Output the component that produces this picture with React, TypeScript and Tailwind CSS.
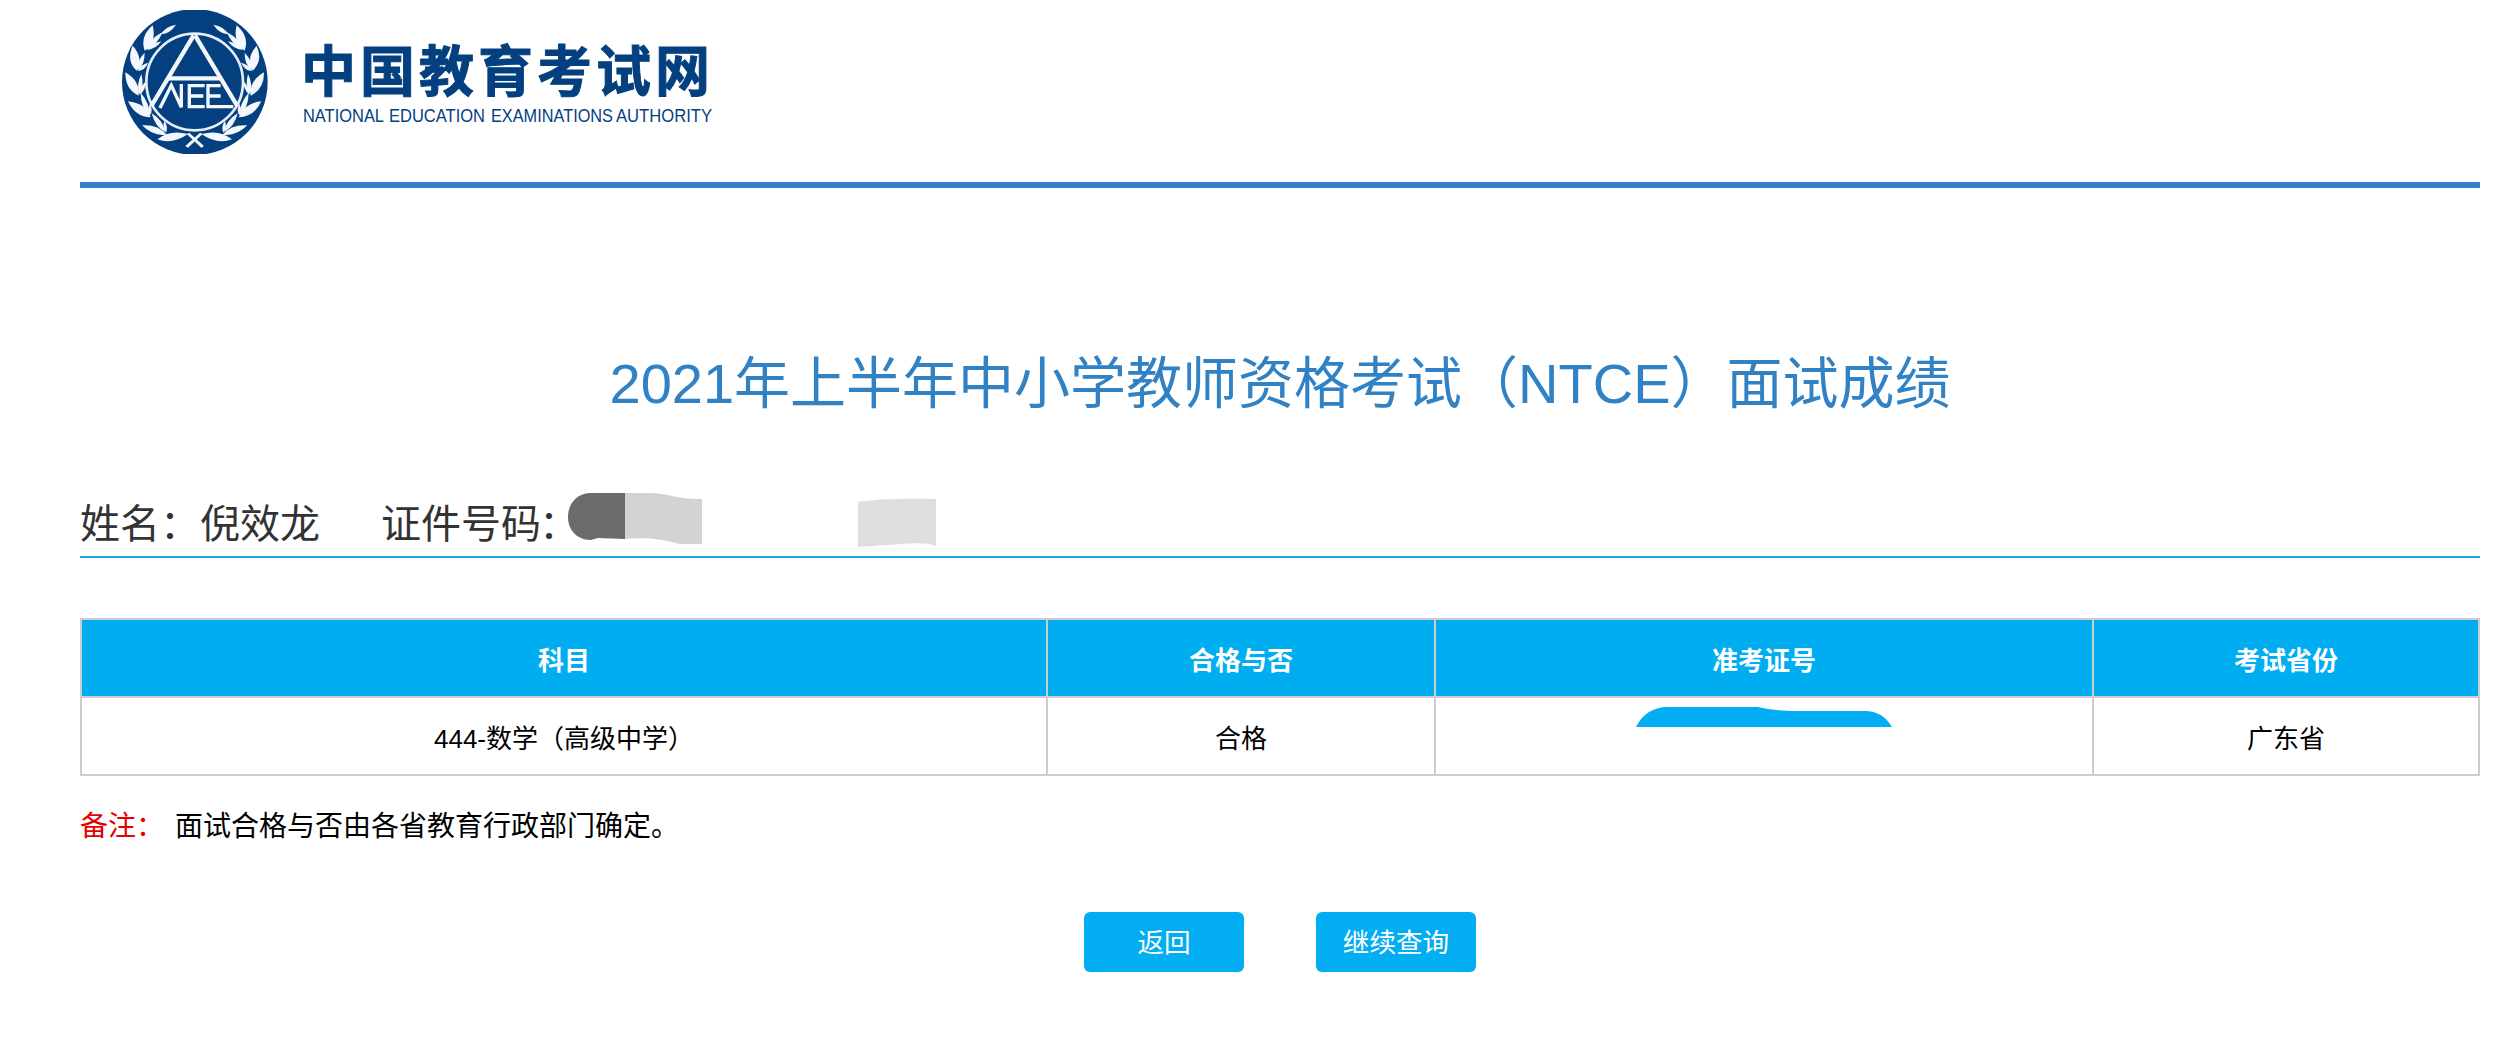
const NAVY = "#04407f";

type Leaf = [number, number, number, number, number];

// Base x, base y, tip x, tip y, bulge of each leaf on the left branch.
const leaves: Leaf[] = [
  [303, 103, 348, 74, 13],
  [254, 152, 278, 76, 27],
  [258, 150, 308, 96, 15],
  [262, 150, 304, 124, 11],
  [230, 212, 218, 137, 27],
  [232, 213, 254, 158, 14],
  [234, 213, 265, 188, 11],
  [236, 287, 196, 217, 26],
  [238, 284, 244, 222, 13],
  [240, 284, 258, 243, 10],
  [272, 352, 204, 304, 26],
  [268, 346, 242, 278, 15],
  [270, 346, 270, 312, 10],
  [320, 404, 246, 376, 20],
  [316, 396, 275, 340, 16],
  [318, 398, 313, 362, 10],
  [292, 418, 384, 402, 24],
];

function leafPath([x1, y1, x2, y2, w]: Leaf) {
  const dx = x2 - x1;
  const dy = y2 - y1;
  const len = Math.hypot(dx, dy);
  const nx = (-dy / len) * w;
  const ny = (dx / len) * w;
  const mx = x1 + dx * 0.45;
  const my = y1 + dy * 0.45;
  return `M${x1} ${y1}Q${mx + nx} ${my + ny} ${x2} ${y2}Q${mx - nx} ${my - ny} ${x1} ${y1}Z`;
}

function Branch() {
  return (
    <g fill="#f4f8fc">
      {leaves.map((leaf, i) => (
        <path key={i} d={leafPath(leaf)} />
      ))}
      <path d="M376 438L420 398L428 402L384 443Z" />
    </g>
  );
}

function Emblem() {
  return (
    <svg viewBox="186 30 438 432" className="h-[144px] w-[146px] shrink-0">
      <circle cx="404.5" cy="246" r="218.5" fill={NAVY} />
      <Branch />
      <g transform="translate(808 0) scale(-1 1)">
        <Branch />
      </g>
      <circle cx="404" cy="246" r="145" fill={NAVY} stroke="#e6eef7" strokeWidth="8" />
      <g fill="none" stroke="#f4f8fc">
        <path d="M274 318L401 106" strokeWidth="13" />
        <path d="M532 318L405 106" strokeWidth="13" />
        <path d="M326 235H482" strokeWidth="13" />
        <path d="M300 324L334 256L364 322V252" strokeWidth="10" />
        <path d="M434 257H388V320H434M388 288H430" strokeWidth="10" />
        <path d="M482 257H444V320H520M444 288H482" strokeWidth="10" />
      </g>
    </svg>
  );
}

// Word, left edge and drawn width; the letters are condensed horizontally.
const CONDENSE = 0.86;
const wordmark: [string, number, number][] = [
  ["NATIONAL", 4, 81],
  ["EDUCATION", 90, 96],
  ["EXAMINATIONS", 192, 122],
  ["AUTHORITY", 317, 96],
];

function Wordmark() {
  return (
    <svg viewBox="0 -16 440 116" className="ml-[31px] mt-[2px] h-[116px] w-[440px] shrink-0" fill={NAVY}>
      <text
        x="2 61 120 179 238 297 356"
        y="62.5"
        fontSize="55"
        stroke={NAVY}
        strokeWidth="1"
        className="font-['Noto_Sans_CJK_SC',sans-serif] font-bold"
      >
        中国教育考试网
      </text>
      {wordmark.map(([word, x, width]) => (
        <text
          key={word}
          transform={`translate(${x} 94) scale(${CONDENSE} 1)`}
          fontSize="19"
          textLength={width / CONDENSE}
          lengthAdjust="spacingAndGlyphs"
          className="font-['Liberation_Sans',sans-serif]"
        >
          {word}
        </text>
      ))}
    </svg>
  );
}

const columns = [
  { head: "科目", value: "444-数学（高级中学）", width: "w-[966px]" },
  { head: "合格与否", value: "合格", width: "w-[388px]" },
  { head: "准考证号", value: "", width: "w-[658px]" },
  { head: "考试省份", value: "广东省", width: "w-[386px]" },
];

function MaskedNumber() {
  return (
    <svg viewBox="0 0 256 20" className="mx-auto -mt-[32px] h-5 w-[256px]">
      <path d="M0 20C6 8 16 0 32 0H122C136 3 146 4 160 4H228C242 4 250 10 256 20Z" fill="#03adf1" />
    </svg>
  );
}

export default function App() {
  return (
    <div className="h-[1040px] w-[2506px] overflow-hidden bg-white pl-20 pr-[26px] font-['Liberation_Sans','Noto_Sans_CJK_SC',sans-serif] text-black">
      <header className="flex h-[188px] items-start border-b-[6px] border-[#3182c9] pl-[42px] pt-[10px]">
        <Emblem />
        <Wordmark />
      </header>

      <h1 className="mt-[156px] text-center text-[56px] font-normal leading-[80px] text-[#3182c4]">
        2021年上半年中小学教师资格考试（NTCE）面试成绩
      </h1>

      <section className="mt-[64px] flex h-[70px] items-start border-b-2 border-[#1ca7dc] text-[40px] font-normal leading-[72px] text-[#333]">
        <span className="w-[301px] whitespace-nowrap">姓名：倪效龙</span>
        <span className="w-[187px] whitespace-nowrap">
          证件号码<span className="-ml-0.5">：</span>
        </span>
        <svg viewBox="0 0 134 52" className="mt-[5px] h-[52px] w-[134px]">
          <path d="M57 0H22C7 1 0 12 0 24C0 36 8 47 23 47L30 45L57 46Z" fill="#6b6b6b" />
          <path d="M57 0H84C102 1 108 6 134 6V51H112C94 47 86 44 57 46Z" fill="#d3d3d3" />
        </svg>
        <svg viewBox="0 0 78 50" className="ml-[156px] mt-[10px] h-[50px] w-[78px]">
          <path d="M0 4C18 1 44 0 78 1V48C65 43 50 46 0 49Z" fill="#dedede" />
        </svg>
      </section>

      <table className="mt-[60px] h-[158px] w-[2399px] table-fixed border-collapse border-2 border-[#ccc] text-center text-[26px] leading-[40px]">
        <thead>
          <tr className="h-[78px] bg-[#00adf1] text-white">
            {columns.map((c) => (
              <th key={c.head} className={`${c.width} border-2 border-[#ccc] p-0 pt-1.5 font-bold`}>
                {c.head}
              </th>
            ))}
          </tr>
        </thead>
        <tbody>
          <tr className="h-[78px]">
            {columns.map((c) => (
              <td key={c.head} className="border-2 border-[#ccc] p-0 pt-1.5">
                {c.value || <MaskedNumber />}
              </td>
            ))}
          </tr>
        </tbody>
      </table>

      <p className="mt-[31px] flex text-[28px] leading-[40px]">
        <span className="w-[95px] whitespace-nowrap text-[#e60000]">备注：</span>
        <span>面试合格与否由各省教育行政部门确定。</span>
      </p>

      <div className="mt-[65px] flex justify-center gap-[72px]">
        <button className="h-[60px] w-40 rounded-md bg-[#03adf1] pb-0.5 font-['Noto_Sans_CJK_SC',sans-serif] text-[26.6px] leading-[58px] text-white">
          返回
        </button>
        <button className="h-[60px] w-40 rounded-md bg-[#03adf1] pb-0.5 font-['Noto_Sans_CJK_SC',sans-serif] text-[26.6px] leading-[58px] text-white">
          继续查询
        </button>
      </div>
    </div>
  );
}
